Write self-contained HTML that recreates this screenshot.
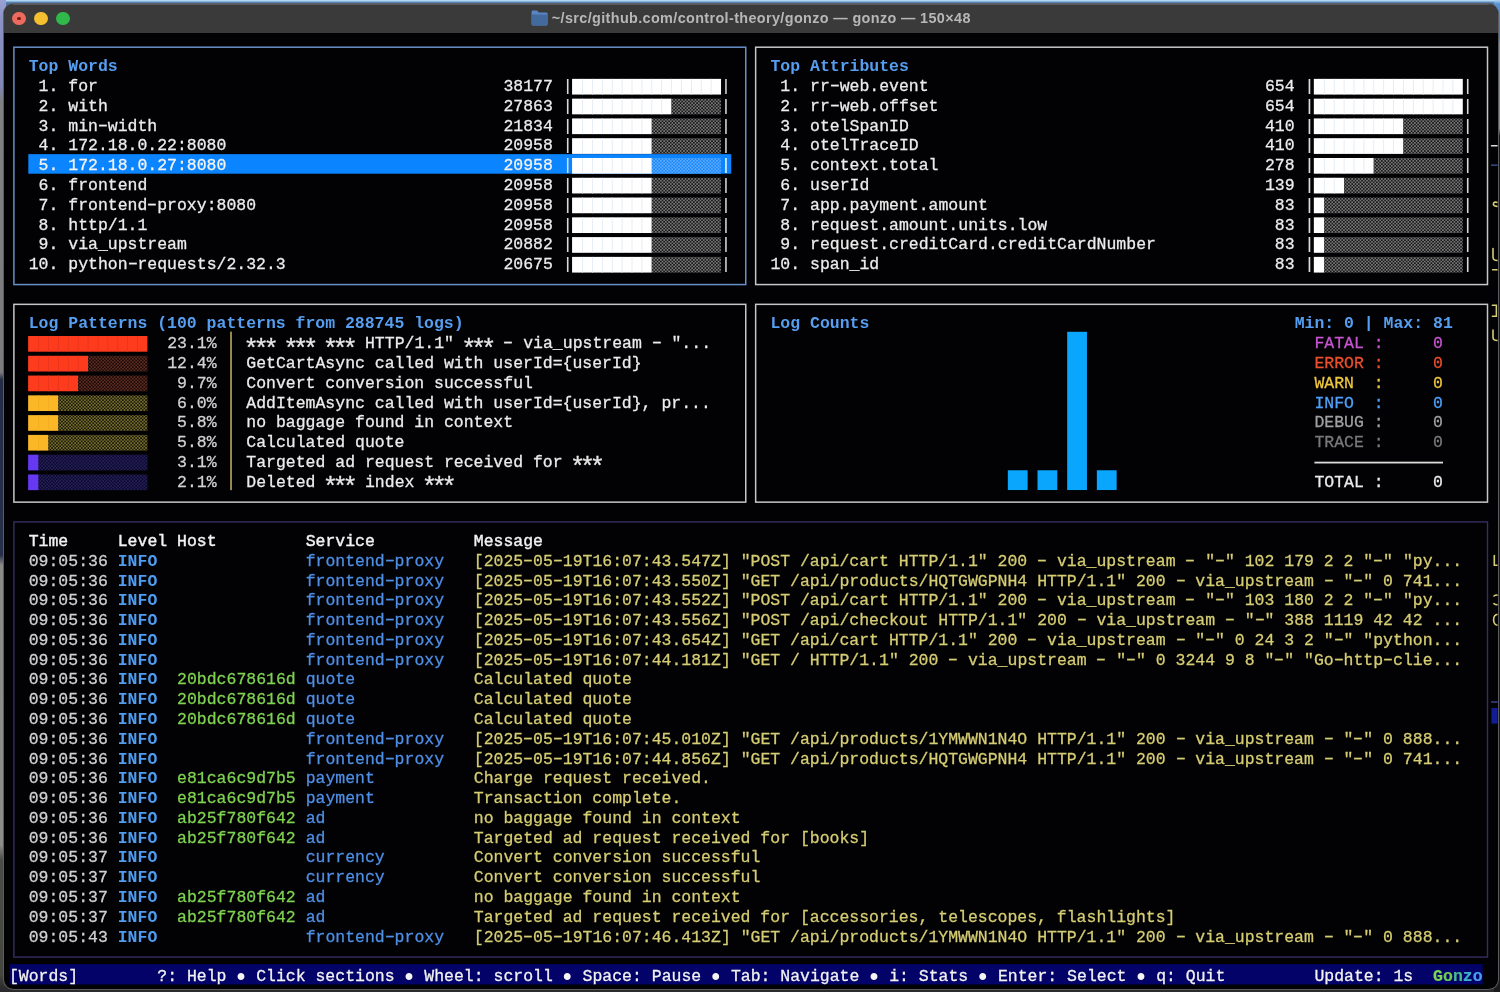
<!DOCTYPE html>
<html lang="en"><head><meta charset="utf-8"><title>gonzo</title>
<style>
html,body{margin:0;padding:0}
body{width:1500px;height:992px;overflow:hidden;background:#2b2b2d;position:relative;font-family:"Liberation Mono","DejaVu Sans Mono",monospace}
#deskT{position:absolute;left:0;top:0;width:1500px;height:6px;background:linear-gradient(#b2d7f3 0,#b2d7f3 1.1px,#5f8bbf 1.9px,#4b7099 4px)}
#deskL{position:absolute;left:0;top:0;width:6px;height:992px;background:linear-gradient(#9aa2d4 0,#8a92c6 20px,#8088b8 85px,#808084 100px,#7c7c7e 372px,#232d45 380px,#26304a 555px,#8a8a86 565px,#8c8c88 845px,#4a4c48 860px,#44463f 975px,#2b2b2d 988px)}
#deskR{position:absolute;left:1494px;top:0;width:6px;height:992px;background:linear-gradient(#b2d7f3 0,#5a8fd0 4px,#4a7ab8 36px,#8c8e92 44px,#909090 128px,#1a1a1c 136px,#1a1a1c 100%)}
#win{position:absolute;left:3.5px;top:4px;width:1494px;height:985px;background:#020204;border-radius:10px 10px 9.5px 9.5px;overflow:hidden;box-shadow:0 0 0 1px #5b5c60}
#tb{position:absolute;left:0;top:0;width:100%;height:29.2px;background:#3a3a3b;will-change:transform}
#tb:before{content:"";position:absolute;left:0;top:0;width:100%;height:1.4px;background:#5c5c5e}
.tl{position:absolute;display:block;top:7.7px;width:13.6px;height:13.6px;border-radius:50%}
#ttl{position:absolute;left:547.8px;top:6.0px;letter-spacing:0.37px;font:bold 14.4px "Liberation Sans",sans-serif;color:#b7b7b8;white-space:pre}
#term{position:absolute;left:0;top:0;width:1500px;height:992px;will-change:transform}
#gfx{position:absolute;left:0;top:0}
.t{position:absolute;white-space:pre;-webkit-text-stroke:0.28px currentColor;font-size:16.48px;line-height:19.78px;height:19.78px;color:#e4e4e4}
.as{position:absolute;white-space:pre;font-size:25.5px;letter-spacing:-5.412px;line-height:19.78px;height:19.78px;color:#e6e6e6;-webkit-text-stroke:0.3px currentColor}
.t b{display:inline-block;font-weight:inherit;transform:translateY(-1.3px) scaleX(1.65)}
.bl{position:absolute;white-space:pre;font-size:25px;line-height:19.78px;height:19.78px;color:#f4f4f4}
.bx{fill:none;stroke-width:1.5}
.bb{stroke:#6890c8}
.bg{stroke:#c6c6c6}
.bp{stroke:#342f62;stroke-width:1.4}
.hd{color:#569ef0;font-weight:bold;-webkit-text-stroke:0}
.w{color:#ececec}
.ws{color:#f4f4f4}
.w2{color:#d2d2d2}
.hh{color:#f2f2f2;-webkit-text-stroke:0.42px currentColor}
.pp{color:#dcdcdc;-webkit-text-stroke:0.15px currentColor}
.pps{color:#f4f8ff;-webkit-text-stroke:0.15px currentColor}
.sel{fill:#0a84ff}
.fw{fill:#fff}
.sw{fill:#e4ebf3}
.sh{fill:url(#pg)}
.shs{fill:url(#ps)}
.fr{fill:#ff3b1e}.mr{fill:#e8351b}
.fy{fill:#fbb726}.my{fill:#f0ae22}
.fp{fill:#6538f2}.mp{fill:#5c33e0}
.sr{fill:url(#pr)}
.sy{fill:url(#py)}
.sp{fill:url(#pp)}
.vsep{fill:#b9a95c}
.hl{fill:#dcdcdc}
.ch{fill:#0aa6fd}
.fa{color:#c955d2}.er{color:#ec4f2d}.wa{color:#edc640}.in{color:#4fa2fb}.de{color:#a0a0a0}.tr{color:#7a7a7a}
.tm{color:#d0d0d0}
.lv{color:#4f9df0;font-weight:bold;-webkit-text-stroke:0}
.ho{color:#7fd351}
.sv{color:#4f8fe6}
.ms{color:#d6cd73}
.sb{fill:#020268}
.st{color:#f2f2f2}
.gz{font-weight:bold;-webkit-text-stroke:0.2px currentColor}
</style></head>
<body>
<div id="deskT"></div><div id="deskL"></div><div id="deskR"></div>
<div id="win">
<div id="tb">
<i class="tl" style="left:8.3px;background:#ec6a5e"></i><i class="tl" style="left:13.3px;top:12.7px;width:3.6px;height:3.6px;background:#7d1a12"></i>
<i class="tl" style="left:30.3px;background:#f5bf2f"></i>
<i class="tl" style="left:52.1px;background:#30b94a"></i>
<svg style="position:absolute;left:526.6px;top:5.8px" width="17.2" height="16" viewBox="0 0 18 16" preserveAspectRatio="none"><path d="M0.6 2 Q0.6 0.6 2 0.6 H6.4 L8.2 2.4 H16 Q17.4 2.4 17.4 3.8 V14 Q17.4 15.4 16 15.4 H2 Q0.6 15.4 0.6 14 Z" fill="#5886c2"/><path d="M0.6 4.6 H17.4 V14 Q17.4 15.4 16 15.4 H2 Q0.6 15.4 0.6 14 Z" fill="#426a9d"/></svg>
<span id="ttl">~/src/github.com/control-theory/gonzo — gonzo — 150×48</span>
</div>
</div>
<div id="term">
<svg id="gfx" width="1500" height="992" viewBox="0 0 1500 992"><defs><clipPath id="ce"><rect x="1488" y="34" width="9.6" height="950"/></clipPath><pattern id="pg" width="3.3" height="3.3" patternUnits="userSpaceOnUse"><rect width="3.3" height="3.3" fill="#787878"/><circle cx="0.825" cy="0.825" r="0.86" fill="#080808"/><circle cx="2.475" cy="2.475" r="0.86" fill="#080808"/></pattern><pattern id="ps" width="3.3" height="3.3" patternUnits="userSpaceOnUse"><rect width="3.3" height="3.3" fill="#5fa9f8"/><circle cx="0.825" cy="0.825" r="0.86" fill="#0a84ff"/><circle cx="2.475" cy="2.475" r="0.86" fill="#0a84ff"/></pattern><pattern id="pr" width="3.3" height="3.3" patternUnits="userSpaceOnUse"><rect width="3.3" height="3.3" fill="#5e2c22"/><circle cx="0.825" cy="0.825" r="0.86" fill="#100403"/><circle cx="2.475" cy="2.475" r="0.86" fill="#100403"/></pattern><pattern id="py" width="3.3" height="3.3" patternUnits="userSpaceOnUse"><rect width="3.3" height="3.3" fill="#756e2e"/><circle cx="0.825" cy="0.825" r="0.86" fill="#0d0b03"/><circle cx="2.475" cy="2.475" r="0.86" fill="#0d0b03"/></pattern><pattern id="pp" width="3.3" height="3.3" patternUnits="userSpaceOnUse"><rect width="3.3" height="3.3" fill="#28214a"/><circle cx="0.825" cy="0.825" r="0.86" fill="#030338"/><circle cx="2.475" cy="2.475" r="0.86" fill="#030338"/></pattern></defs>
<rect class="sel" x="28.33" y="154.13" width="702.89" height="19.58"/>
<rect class="sb" x="9.55" y="964.16" width="1473.11" height="20.28"/>
<rect class="bx bb" x="13.89" y="47.2" width="731.86" height="237.36"/>
<rect class="bx bg" x="755.65" y="47.2" width="731.86" height="237.36"/>
<rect class="bx bg" x="13.89" y="304.34" width="731.86" height="197.8"/>
<rect class="bx bg" x="755.65" y="304.34" width="731.86" height="197.8"/>
<rect class="bx bp" x="13.89" y="521.92" width="1473.61" height="435.16"/>
<rect class="fw" x="572.08" y="78.86" width="148.95" height="15.7"/>
<rect class="sw" x="582.12" y="78.86" width="0.9" height="15.7"/>
<rect class="sw" x="592.01" y="78.86" width="0.9" height="15.7"/>
<rect class="sw" x="601.9" y="78.86" width="0.9" height="15.7"/>
<rect class="sw" x="611.79" y="78.86" width="0.9" height="15.7"/>
<rect class="sw" x="621.68" y="78.86" width="0.9" height="15.7"/>
<rect class="sw" x="631.57" y="78.86" width="0.9" height="15.7"/>
<rect class="sw" x="641.46" y="78.86" width="0.9" height="15.7"/>
<rect class="sw" x="651.35" y="78.86" width="0.9" height="15.7"/>
<rect class="sw" x="661.24" y="78.86" width="0.9" height="15.7"/>
<rect class="sw" x="671.13" y="78.86" width="0.9" height="15.7"/>
<rect class="sw" x="681.02" y="78.86" width="0.9" height="15.7"/>
<rect class="sw" x="690.91" y="78.86" width="0.9" height="15.7"/>
<rect class="sw" x="700.8" y="78.86" width="0.9" height="15.7"/>
<rect class="sw" x="710.69" y="78.86" width="0.9" height="15.7"/>
<rect class="fw" x="572.08" y="98.64" width="99.5" height="15.7"/>
<rect class="sw" x="582.12" y="98.64" width="0.9" height="15.7"/>
<rect class="sw" x="592.01" y="98.64" width="0.9" height="15.7"/>
<rect class="sw" x="601.9" y="98.64" width="0.9" height="15.7"/>
<rect class="sw" x="611.79" y="98.64" width="0.9" height="15.7"/>
<rect class="sw" x="621.68" y="98.64" width="0.9" height="15.7"/>
<rect class="sw" x="631.57" y="98.64" width="0.9" height="15.7"/>
<rect class="sw" x="641.46" y="98.64" width="0.9" height="15.7"/>
<rect class="sw" x="651.35" y="98.64" width="0.9" height="15.7"/>
<rect class="sw" x="661.24" y="98.64" width="0.9" height="15.7"/>
<rect class="sh" x="671.58" y="98.64" width="49.45" height="15.7"/>
<rect class="fw" x="572.08" y="118.42" width="79.72" height="15.7"/>
<rect class="sw" x="582.12" y="118.42" width="0.9" height="15.7"/>
<rect class="sw" x="592.01" y="118.42" width="0.9" height="15.7"/>
<rect class="sw" x="601.9" y="118.42" width="0.9" height="15.7"/>
<rect class="sw" x="611.79" y="118.42" width="0.9" height="15.7"/>
<rect class="sw" x="621.68" y="118.42" width="0.9" height="15.7"/>
<rect class="sw" x="631.57" y="118.42" width="0.9" height="15.7"/>
<rect class="sw" x="641.46" y="118.42" width="0.9" height="15.7"/>
<rect class="sh" x="651.8" y="118.42" width="69.23" height="15.7"/>
<rect class="fw" x="572.08" y="138.2" width="79.72" height="15.7"/>
<rect class="sw" x="582.12" y="138.2" width="0.9" height="15.7"/>
<rect class="sw" x="592.01" y="138.2" width="0.9" height="15.7"/>
<rect class="sw" x="601.9" y="138.2" width="0.9" height="15.7"/>
<rect class="sw" x="611.79" y="138.2" width="0.9" height="15.7"/>
<rect class="sw" x="621.68" y="138.2" width="0.9" height="15.7"/>
<rect class="sw" x="631.57" y="138.2" width="0.9" height="15.7"/>
<rect class="sw" x="641.46" y="138.2" width="0.9" height="15.7"/>
<rect class="sh" x="651.8" y="138.2" width="69.23" height="15.7"/>
<rect class="fw" x="572.08" y="157.98" width="79.72" height="15.7"/>
<rect class="sw" x="582.12" y="157.98" width="0.9" height="15.7"/>
<rect class="sw" x="592.01" y="157.98" width="0.9" height="15.7"/>
<rect class="sw" x="601.9" y="157.98" width="0.9" height="15.7"/>
<rect class="sw" x="611.79" y="157.98" width="0.9" height="15.7"/>
<rect class="sw" x="621.68" y="157.98" width="0.9" height="15.7"/>
<rect class="sw" x="631.57" y="157.98" width="0.9" height="15.7"/>
<rect class="sw" x="641.46" y="157.98" width="0.9" height="15.7"/>
<rect class="shs" x="651.8" y="157.98" width="69.23" height="15.7"/>
<rect class="fw" x="572.08" y="177.76" width="79.72" height="15.7"/>
<rect class="sw" x="582.12" y="177.76" width="0.9" height="15.7"/>
<rect class="sw" x="592.01" y="177.76" width="0.9" height="15.7"/>
<rect class="sw" x="601.9" y="177.76" width="0.9" height="15.7"/>
<rect class="sw" x="611.79" y="177.76" width="0.9" height="15.7"/>
<rect class="sw" x="621.68" y="177.76" width="0.9" height="15.7"/>
<rect class="sw" x="631.57" y="177.76" width="0.9" height="15.7"/>
<rect class="sw" x="641.46" y="177.76" width="0.9" height="15.7"/>
<rect class="sh" x="651.8" y="177.76" width="69.23" height="15.7"/>
<rect class="fw" x="572.08" y="197.54" width="79.72" height="15.7"/>
<rect class="sw" x="582.12" y="197.54" width="0.9" height="15.7"/>
<rect class="sw" x="592.01" y="197.54" width="0.9" height="15.7"/>
<rect class="sw" x="601.9" y="197.54" width="0.9" height="15.7"/>
<rect class="sw" x="611.79" y="197.54" width="0.9" height="15.7"/>
<rect class="sw" x="621.68" y="197.54" width="0.9" height="15.7"/>
<rect class="sw" x="631.57" y="197.54" width="0.9" height="15.7"/>
<rect class="sw" x="641.46" y="197.54" width="0.9" height="15.7"/>
<rect class="sh" x="651.8" y="197.54" width="69.23" height="15.7"/>
<rect class="fw" x="572.08" y="217.32" width="79.72" height="15.7"/>
<rect class="sw" x="582.12" y="217.32" width="0.9" height="15.7"/>
<rect class="sw" x="592.01" y="217.32" width="0.9" height="15.7"/>
<rect class="sw" x="601.9" y="217.32" width="0.9" height="15.7"/>
<rect class="sw" x="611.79" y="217.32" width="0.9" height="15.7"/>
<rect class="sw" x="621.68" y="217.32" width="0.9" height="15.7"/>
<rect class="sw" x="631.57" y="217.32" width="0.9" height="15.7"/>
<rect class="sw" x="641.46" y="217.32" width="0.9" height="15.7"/>
<rect class="sh" x="651.8" y="217.32" width="69.23" height="15.7"/>
<rect class="fw" x="572.08" y="237.1" width="79.72" height="15.7"/>
<rect class="sw" x="582.12" y="237.1" width="0.9" height="15.7"/>
<rect class="sw" x="592.01" y="237.1" width="0.9" height="15.7"/>
<rect class="sw" x="601.9" y="237.1" width="0.9" height="15.7"/>
<rect class="sw" x="611.79" y="237.1" width="0.9" height="15.7"/>
<rect class="sw" x="621.68" y="237.1" width="0.9" height="15.7"/>
<rect class="sw" x="631.57" y="237.1" width="0.9" height="15.7"/>
<rect class="sw" x="641.46" y="237.1" width="0.9" height="15.7"/>
<rect class="sh" x="651.8" y="237.1" width="69.23" height="15.7"/>
<rect class="fw" x="572.08" y="256.88" width="79.72" height="15.7"/>
<rect class="sw" x="582.12" y="256.88" width="0.9" height="15.7"/>
<rect class="sw" x="592.01" y="256.88" width="0.9" height="15.7"/>
<rect class="sw" x="601.9" y="256.88" width="0.9" height="15.7"/>
<rect class="sw" x="611.79" y="256.88" width="0.9" height="15.7"/>
<rect class="sw" x="621.68" y="256.88" width="0.9" height="15.7"/>
<rect class="sw" x="631.57" y="256.88" width="0.9" height="15.7"/>
<rect class="sw" x="641.46" y="256.88" width="0.9" height="15.7"/>
<rect class="sh" x="651.8" y="256.88" width="69.23" height="15.7"/>
<rect class="fw" x="1313.83" y="78.86" width="148.95" height="15.7"/>
<rect class="sw" x="1323.87" y="78.86" width="0.9" height="15.7"/>
<rect class="sw" x="1333.76" y="78.86" width="0.9" height="15.7"/>
<rect class="sw" x="1343.65" y="78.86" width="0.9" height="15.7"/>
<rect class="sw" x="1353.54" y="78.86" width="0.9" height="15.7"/>
<rect class="sw" x="1363.43" y="78.86" width="0.9" height="15.7"/>
<rect class="sw" x="1373.32" y="78.86" width="0.9" height="15.7"/>
<rect class="sw" x="1383.21" y="78.86" width="0.9" height="15.7"/>
<rect class="sw" x="1393.1" y="78.86" width="0.9" height="15.7"/>
<rect class="sw" x="1402.99" y="78.86" width="0.9" height="15.7"/>
<rect class="sw" x="1412.88" y="78.86" width="0.9" height="15.7"/>
<rect class="sw" x="1422.77" y="78.86" width="0.9" height="15.7"/>
<rect class="sw" x="1432.66" y="78.86" width="0.9" height="15.7"/>
<rect class="sw" x="1442.55" y="78.86" width="0.9" height="15.7"/>
<rect class="sw" x="1452.44" y="78.86" width="0.9" height="15.7"/>
<rect class="fw" x="1313.83" y="98.64" width="148.95" height="15.7"/>
<rect class="sw" x="1323.87" y="98.64" width="0.9" height="15.7"/>
<rect class="sw" x="1333.76" y="98.64" width="0.9" height="15.7"/>
<rect class="sw" x="1343.65" y="98.64" width="0.9" height="15.7"/>
<rect class="sw" x="1353.54" y="98.64" width="0.9" height="15.7"/>
<rect class="sw" x="1363.43" y="98.64" width="0.9" height="15.7"/>
<rect class="sw" x="1373.32" y="98.64" width="0.9" height="15.7"/>
<rect class="sw" x="1383.21" y="98.64" width="0.9" height="15.7"/>
<rect class="sw" x="1393.1" y="98.64" width="0.9" height="15.7"/>
<rect class="sw" x="1402.99" y="98.64" width="0.9" height="15.7"/>
<rect class="sw" x="1412.88" y="98.64" width="0.9" height="15.7"/>
<rect class="sw" x="1422.77" y="98.64" width="0.9" height="15.7"/>
<rect class="sw" x="1432.66" y="98.64" width="0.9" height="15.7"/>
<rect class="sw" x="1442.55" y="98.64" width="0.9" height="15.7"/>
<rect class="sw" x="1452.44" y="98.64" width="0.9" height="15.7"/>
<rect class="fw" x="1313.83" y="118.42" width="89.61" height="15.7"/>
<rect class="sw" x="1323.87" y="118.42" width="0.9" height="15.7"/>
<rect class="sw" x="1333.76" y="118.42" width="0.9" height="15.7"/>
<rect class="sw" x="1343.65" y="118.42" width="0.9" height="15.7"/>
<rect class="sw" x="1353.54" y="118.42" width="0.9" height="15.7"/>
<rect class="sw" x="1363.43" y="118.42" width="0.9" height="15.7"/>
<rect class="sw" x="1373.32" y="118.42" width="0.9" height="15.7"/>
<rect class="sw" x="1383.21" y="118.42" width="0.9" height="15.7"/>
<rect class="sw" x="1393.1" y="118.42" width="0.9" height="15.7"/>
<rect class="sh" x="1403.44" y="118.42" width="59.34" height="15.7"/>
<rect class="fw" x="1313.83" y="138.2" width="89.61" height="15.7"/>
<rect class="sw" x="1323.87" y="138.2" width="0.9" height="15.7"/>
<rect class="sw" x="1333.76" y="138.2" width="0.9" height="15.7"/>
<rect class="sw" x="1343.65" y="138.2" width="0.9" height="15.7"/>
<rect class="sw" x="1353.54" y="138.2" width="0.9" height="15.7"/>
<rect class="sw" x="1363.43" y="138.2" width="0.9" height="15.7"/>
<rect class="sw" x="1373.32" y="138.2" width="0.9" height="15.7"/>
<rect class="sw" x="1383.21" y="138.2" width="0.9" height="15.7"/>
<rect class="sw" x="1393.1" y="138.2" width="0.9" height="15.7"/>
<rect class="sh" x="1403.44" y="138.2" width="59.34" height="15.7"/>
<rect class="fw" x="1313.83" y="157.98" width="59.94" height="15.7"/>
<rect class="sw" x="1323.87" y="157.98" width="0.9" height="15.7"/>
<rect class="sw" x="1333.76" y="157.98" width="0.9" height="15.7"/>
<rect class="sw" x="1343.65" y="157.98" width="0.9" height="15.7"/>
<rect class="sw" x="1353.54" y="157.98" width="0.9" height="15.7"/>
<rect class="sw" x="1363.43" y="157.98" width="0.9" height="15.7"/>
<rect class="sh" x="1373.77" y="157.98" width="89.01" height="15.7"/>
<rect class="fw" x="1313.83" y="177.76" width="30.27" height="15.7"/>
<rect class="sw" x="1323.87" y="177.76" width="0.9" height="15.7"/>
<rect class="sw" x="1333.76" y="177.76" width="0.9" height="15.7"/>
<rect class="sh" x="1344.1" y="177.76" width="118.68" height="15.7"/>
<rect class="fw" x="1313.83" y="197.54" width="10.49" height="15.7"/>
<rect class="sh" x="1324.32" y="197.54" width="138.46" height="15.7"/>
<rect class="fw" x="1313.83" y="217.32" width="10.49" height="15.7"/>
<rect class="sh" x="1324.32" y="217.32" width="138.46" height="15.7"/>
<rect class="fw" x="1313.83" y="237.1" width="10.49" height="15.7"/>
<rect class="sh" x="1324.32" y="237.1" width="138.46" height="15.7"/>
<rect class="fw" x="1313.83" y="256.88" width="10.49" height="15.7"/>
<rect class="sh" x="1324.32" y="256.88" width="138.46" height="15.7"/>
<rect class="fr" x="28.13" y="336" width="119.28" height="15.7"/>
<rect class="mr" x="38.17" y="336" width="0.9" height="15.7"/>
<rect class="mr" x="48.06" y="336" width="0.9" height="15.7"/>
<rect class="mr" x="57.95" y="336" width="0.9" height="15.7"/>
<rect class="mr" x="67.84" y="336" width="0.9" height="15.7"/>
<rect class="mr" x="77.73" y="336" width="0.9" height="15.7"/>
<rect class="mr" x="87.62" y="336" width="0.9" height="15.7"/>
<rect class="mr" x="97.51" y="336" width="0.9" height="15.7"/>
<rect class="mr" x="107.4" y="336" width="0.9" height="15.7"/>
<rect class="mr" x="117.29" y="336" width="0.9" height="15.7"/>
<rect class="mr" x="127.18" y="336" width="0.9" height="15.7"/>
<rect class="mr" x="137.07" y="336" width="0.9" height="15.7"/>
<rect class="fr" x="28.13" y="355.78" width="59.94" height="15.7"/>
<rect class="mr" x="38.17" y="355.78" width="0.9" height="15.7"/>
<rect class="mr" x="48.06" y="355.78" width="0.9" height="15.7"/>
<rect class="mr" x="57.95" y="355.78" width="0.9" height="15.7"/>
<rect class="mr" x="67.84" y="355.78" width="0.9" height="15.7"/>
<rect class="mr" x="77.73" y="355.78" width="0.9" height="15.7"/>
<rect class="sr" x="88.07" y="355.78" width="59.34" height="15.7"/>
<rect class="fr" x="28.13" y="375.56" width="50.05" height="15.7"/>
<rect class="mr" x="38.17" y="375.56" width="0.9" height="15.7"/>
<rect class="mr" x="48.06" y="375.56" width="0.9" height="15.7"/>
<rect class="mr" x="57.95" y="375.56" width="0.9" height="15.7"/>
<rect class="mr" x="67.84" y="375.56" width="0.9" height="15.7"/>
<rect class="sr" x="78.18" y="375.56" width="69.23" height="15.7"/>
<rect class="fy" x="28.13" y="395.34" width="30.27" height="15.7"/>
<rect class="my" x="38.17" y="395.34" width="0.9" height="15.7"/>
<rect class="my" x="48.06" y="395.34" width="0.9" height="15.7"/>
<rect class="sy" x="58.4" y="395.34" width="89.01" height="15.7"/>
<rect class="fy" x="28.13" y="415.12" width="30.27" height="15.7"/>
<rect class="my" x="38.17" y="415.12" width="0.9" height="15.7"/>
<rect class="my" x="48.06" y="415.12" width="0.9" height="15.7"/>
<rect class="sy" x="58.4" y="415.12" width="89.01" height="15.7"/>
<rect class="fy" x="28.13" y="434.9" width="20.38" height="15.7"/>
<rect class="my" x="38.17" y="434.9" width="0.9" height="15.7"/>
<rect class="sy" x="48.51" y="434.9" width="98.9" height="15.7"/>
<rect class="fp" x="28.13" y="454.68" width="10.49" height="15.7"/>
<rect class="sp" x="38.62" y="454.68" width="108.79" height="15.7"/>
<rect class="fp" x="28.13" y="474.46" width="10.49" height="15.7"/>
<rect class="sp" x="38.62" y="474.46" width="108.79" height="15.7"/>
<rect class="vsep" x="230.22" y="331.6" width="1.6" height="158.54"/>
<rect class="hl" x="1314.43" y="461.68" width="128.57" height="1.8"/>
<rect class="ch" x="1007.84" y="470.26" width="19.78" height="19.78"/>
<rect class="ch" x="1037.51" y="470.26" width="19.78" height="19.78"/>
<rect class="ch" x="1067.18" y="331.8" width="19.78" height="158.24"/>
<rect class="ch" x="1096.85" y="470.26" width="19.78" height="19.78"/>
<g clip-path="url(#ce)" fill="none" stroke-linecap="round"><path d="M1491.5 145.7H1498" stroke="#dcdcdc" stroke-width="1.5"/><path d="M1491.5 165.2H1498" stroke="#3d5da0" stroke-width="1.3"/><g stroke="#d6cd73" stroke-width="1.6"><path d="M1498 202.6Q1493.2 201 1493.4 204.6Q1494 206.6 1498 206.4"/><path d="M1493 248.5V257.5Q1493.2 260.8 1498 260.4"/><path d="M1492.6 269.7H1498"/><path d="M1492.4 305.2H1496.4V316.2H1492.4"/><path d="M1493 330V337.6Q1493.2 340.8 1498 340.4"/><path d="M1494.3 555.5V565.3H1498"/><path d="M1494 596Q1496 594.4 1498 595.2M1494 603.6Q1496 605.2 1498 604.6"/><path d="M1498 614.2Q1493.6 614.6 1493.6 619.7Q1493.6 625 1498 625.3"/></g><path d="M1491.5 702H1498" stroke="#39458f" stroke-width="1.3"/><rect x="1491.4" y="708" width="7" height="15.6" fill="#111d90" stroke="none"/></g>
</svg>
<span class="t hd" style="left:28.73px;top:57.28px">Top Words</span>
<span class="t w" style="left:28.73px;top:77.06px"> 1. for</span>
<span class="t w" style="left:503.45px;top:77.06px">38177</span>
<span class="t pp" style="left:562.79px;top:77.06px">|</span>
<span class="t pp" style="left:721.03px;top:77.06px">|</span>
<span class="t w" style="left:28.73px;top:96.84px"> 2. with</span>
<span class="t w" style="left:503.45px;top:96.84px">27863</span>
<span class="t pp" style="left:562.79px;top:96.84px">|</span>
<span class="t pp" style="left:721.03px;top:96.84px">|</span>
<span class="t w" style="left:28.73px;top:116.62px"> 3. min<b>-</b>width</span>
<span class="t w" style="left:503.45px;top:116.62px">21834</span>
<span class="t pp" style="left:562.79px;top:116.62px">|</span>
<span class="t pp" style="left:721.03px;top:116.62px">|</span>
<span class="t w" style="left:28.73px;top:136.4px"> 4. 172.18.0.22:8080</span>
<span class="t w" style="left:503.45px;top:136.4px">20958</span>
<span class="t pp" style="left:562.79px;top:136.4px">|</span>
<span class="t pp" style="left:721.03px;top:136.4px">|</span>
<span class="t ws" style="left:28.73px;top:156.18px"> 5. 172.18.0.27:8080</span>
<span class="t ws" style="left:503.45px;top:156.18px">20958</span>
<span class="t pp" style="left:562.79px;top:156.18px">|</span>
<span class="t pps" style="left:721.03px;top:156.18px">|</span>
<span class="t w" style="left:28.73px;top:175.96px"> 6. frontend</span>
<span class="t w" style="left:503.45px;top:175.96px">20958</span>
<span class="t pp" style="left:562.79px;top:175.96px">|</span>
<span class="t pp" style="left:721.03px;top:175.96px">|</span>
<span class="t w" style="left:28.73px;top:195.74px"> 7. frontend<b>-</b>proxy:8080</span>
<span class="t w" style="left:503.45px;top:195.74px">20958</span>
<span class="t pp" style="left:562.79px;top:195.74px">|</span>
<span class="t pp" style="left:721.03px;top:195.74px">|</span>
<span class="t w" style="left:28.73px;top:215.52px"> 8. http/1.1</span>
<span class="t w" style="left:503.45px;top:215.52px">20958</span>
<span class="t pp" style="left:562.79px;top:215.52px">|</span>
<span class="t pp" style="left:721.03px;top:215.52px">|</span>
<span class="t w" style="left:28.73px;top:235.3px"> 9. via_upstream</span>
<span class="t w" style="left:503.45px;top:235.3px">20882</span>
<span class="t pp" style="left:562.79px;top:235.3px">|</span>
<span class="t pp" style="left:721.03px;top:235.3px">|</span>
<span class="t w" style="left:28.73px;top:255.08px">10. python<b>-</b>requests/2.32.3</span>
<span class="t w" style="left:503.45px;top:255.08px">20675</span>
<span class="t pp" style="left:562.79px;top:255.08px">|</span>
<span class="t pp" style="left:721.03px;top:255.08px">|</span>
<span class="t hd" style="left:770.48px;top:57.28px">Top Attributes</span>
<span class="t w" style="left:770.48px;top:77.06px"> 1. rr<b>-</b>web.event</span>
<span class="t w" style="left:1245.2px;top:77.06px">  654</span>
<span class="t pp" style="left:1304.54px;top:77.06px">|</span>
<span class="t pp" style="left:1462.78px;top:77.06px">|</span>
<span class="t w" style="left:770.48px;top:96.84px"> 2. rr<b>-</b>web.offset</span>
<span class="t w" style="left:1245.2px;top:96.84px">  654</span>
<span class="t pp" style="left:1304.54px;top:96.84px">|</span>
<span class="t pp" style="left:1462.78px;top:96.84px">|</span>
<span class="t w" style="left:770.48px;top:116.62px"> 3. otelSpanID</span>
<span class="t w" style="left:1245.2px;top:116.62px">  410</span>
<span class="t pp" style="left:1304.54px;top:116.62px">|</span>
<span class="t pp" style="left:1462.78px;top:116.62px">|</span>
<span class="t w" style="left:770.48px;top:136.4px"> 4. otelTraceID</span>
<span class="t w" style="left:1245.2px;top:136.4px">  410</span>
<span class="t pp" style="left:1304.54px;top:136.4px">|</span>
<span class="t pp" style="left:1462.78px;top:136.4px">|</span>
<span class="t w" style="left:770.48px;top:156.18px"> 5. context.total</span>
<span class="t w" style="left:1245.2px;top:156.18px">  278</span>
<span class="t pp" style="left:1304.54px;top:156.18px">|</span>
<span class="t pp" style="left:1462.78px;top:156.18px">|</span>
<span class="t w" style="left:770.48px;top:175.96px"> 6. userId</span>
<span class="t w" style="left:1245.2px;top:175.96px">  139</span>
<span class="t pp" style="left:1304.54px;top:175.96px">|</span>
<span class="t pp" style="left:1462.78px;top:175.96px">|</span>
<span class="t w" style="left:770.48px;top:195.74px"> 7. app.payment.amount</span>
<span class="t w" style="left:1245.2px;top:195.74px">   83</span>
<span class="t pp" style="left:1304.54px;top:195.74px">|</span>
<span class="t pp" style="left:1462.78px;top:195.74px">|</span>
<span class="t w" style="left:770.48px;top:215.52px"> 8. request.amount.units.low</span>
<span class="t w" style="left:1245.2px;top:215.52px">   83</span>
<span class="t pp" style="left:1304.54px;top:215.52px">|</span>
<span class="t pp" style="left:1462.78px;top:215.52px">|</span>
<span class="t w" style="left:770.48px;top:235.3px"> 9. request.creditCard.creditCardNumber</span>
<span class="t w" style="left:1245.2px;top:235.3px">   83</span>
<span class="t pp" style="left:1304.54px;top:235.3px">|</span>
<span class="t pp" style="left:1462.78px;top:235.3px">|</span>
<span class="t w" style="left:770.48px;top:255.08px">10. span_id</span>
<span class="t w" style="left:1245.2px;top:255.08px">   83</span>
<span class="t pp" style="left:1304.54px;top:255.08px">|</span>
<span class="t pp" style="left:1462.78px;top:255.08px">|</span>
<span class="t hd" style="left:28.73px;top:314.42px">Log Patterns (100 patterns from 288745 logs)</span>
<span class="t w2" style="left:157.3px;top:334.2px"> 23.1%</span>
<span class="as" style="left:243.61px;top:340.8px">***</span>
<span class="as" style="left:283.17px;top:340.8px">***</span>
<span class="as" style="left:322.73px;top:340.8px">***</span>
<span class="t w" style="left:364.99px;top:334.2px">HTTP/1.1"</span>
<span class="as" style="left:461.19px;top:340.8px">***</span>
<span class="t w" style="left:503.45px;top:334.2px"><b>-</b> via_upstream <b>-</b> "...</span>
<span class="t w2" style="left:157.3px;top:353.98px"> 12.4%</span>
<span class="t w" style="left:246.31px;top:353.98px">GetCartAsync called with userId={userId}</span>
<span class="t w2" style="left:157.3px;top:373.76px">  9.7%</span>
<span class="t w" style="left:246.31px;top:373.76px">Convert conversion successful</span>
<span class="t w2" style="left:157.3px;top:393.54px">  6.0%</span>
<span class="t w" style="left:246.31px;top:393.54px">AddItemAsync called with userId={userId}, pr...</span>
<span class="t w2" style="left:157.3px;top:413.32px">  5.8%</span>
<span class="t w" style="left:246.31px;top:413.32px">no baggage found in context</span>
<span class="t w2" style="left:157.3px;top:433.1px">  5.8%</span>
<span class="t w" style="left:246.31px;top:433.1px">Calculated quote</span>
<span class="t w2" style="left:157.3px;top:452.88px">  3.1%</span>
<span class="t w" style="left:246.31px;top:452.88px">Targeted ad request received for</span>
<span class="as" style="left:569.98px;top:459.48px">***</span>
<span class="t w2" style="left:157.3px;top:472.66px">  2.1%</span>
<span class="t w" style="left:246.31px;top:472.66px">Deleted</span>
<span class="as" style="left:322.73px;top:479.26px">***</span>
<span class="t w" style="left:364.99px;top:472.66px">index</span>
<span class="as" style="left:421.63px;top:479.26px">***</span>
<span class="t hd" style="left:770.48px;top:314.42px">Log Counts</span>
<span class="t hd" style="left:1294.65px;top:314.42px">Min: 0 | Max: 81</span>
<span class="t fa" style="left:1314.43px;top:334.2px">FATAL :     0</span>
<span class="t er" style="left:1314.43px;top:353.98px">ERROR :     0</span>
<span class="t wa" style="left:1314.43px;top:373.76px">WARN  :     0</span>
<span class="t in" style="left:1314.43px;top:393.54px">INFO  :     0</span>
<span class="t de" style="left:1314.43px;top:413.32px">DEBUG :     0</span>
<span class="t tr" style="left:1314.43px;top:433.1px">TRACE :     0</span>
<span class="t w" style="left:1314.43px;top:472.66px">TOTAL :     0</span>
<span class="t hh" style="left:28.73px;top:532px">Time</span>
<span class="t hh" style="left:117.74px;top:532px">Level</span>
<span class="t hh" style="left:177.08px;top:532px">Host</span>
<span class="t hh" style="left:305.65px;top:532px">Service</span>
<span class="t hh" style="left:473.78px;top:532px">Message</span>
<span class="t tm" style="left:28.73px;top:551.78px">09:05:36</span>
<span class="t lv" style="left:117.74px;top:551.78px">INFO</span>
<span class="t sv" style="left:305.65px;top:551.78px">frontend<b>-</b>proxy</span>
<span class="t ms" style="left:473.78px;top:551.78px">[2025<b>-</b>05<b>-</b>19T16:07:43.547Z] "POST /api/cart HTTP/1.1" 200 <b>-</b> via_upstream <b>-</b> "<b>-</b>" 102 179 2 2 "<b>-</b>" "py...</span>
<span class="t tm" style="left:28.73px;top:571.56px">09:05:36</span>
<span class="t lv" style="left:117.74px;top:571.56px">INFO</span>
<span class="t sv" style="left:305.65px;top:571.56px">frontend<b>-</b>proxy</span>
<span class="t ms" style="left:473.78px;top:571.56px">[2025<b>-</b>05<b>-</b>19T16:07:43.550Z] "GET /api/products/HQTGWGPNH4 HTTP/1.1" 200 <b>-</b> via_upstream <b>-</b> "<b>-</b>" 0 741...</span>
<span class="t tm" style="left:28.73px;top:591.34px">09:05:36</span>
<span class="t lv" style="left:117.74px;top:591.34px">INFO</span>
<span class="t sv" style="left:305.65px;top:591.34px">frontend<b>-</b>proxy</span>
<span class="t ms" style="left:473.78px;top:591.34px">[2025<b>-</b>05<b>-</b>19T16:07:43.552Z] "POST /api/cart HTTP/1.1" 200 <b>-</b> via_upstream <b>-</b> "<b>-</b>" 103 180 2 2 "<b>-</b>" "py...</span>
<span class="t tm" style="left:28.73px;top:611.12px">09:05:36</span>
<span class="t lv" style="left:117.74px;top:611.12px">INFO</span>
<span class="t sv" style="left:305.65px;top:611.12px">frontend<b>-</b>proxy</span>
<span class="t ms" style="left:473.78px;top:611.12px">[2025<b>-</b>05<b>-</b>19T16:07:43.556Z] "POST /api/checkout HTTP/1.1" 200 <b>-</b> via_upstream <b>-</b> "<b>-</b>" 388 1119 42 42 ...</span>
<span class="t tm" style="left:28.73px;top:630.9px">09:05:36</span>
<span class="t lv" style="left:117.74px;top:630.9px">INFO</span>
<span class="t sv" style="left:305.65px;top:630.9px">frontend<b>-</b>proxy</span>
<span class="t ms" style="left:473.78px;top:630.9px">[2025<b>-</b>05<b>-</b>19T16:07:43.654Z] "GET /api/cart HTTP/1.1" 200 <b>-</b> via_upstream <b>-</b> "<b>-</b>" 0 24 3 2 "<b>-</b>" "python...</span>
<span class="t tm" style="left:28.73px;top:650.68px">09:05:36</span>
<span class="t lv" style="left:117.74px;top:650.68px">INFO</span>
<span class="t sv" style="left:305.65px;top:650.68px">frontend<b>-</b>proxy</span>
<span class="t ms" style="left:473.78px;top:650.68px">[2025<b>-</b>05<b>-</b>19T16:07:44.181Z] "GET / HTTP/1.1" 200 <b>-</b> via_upstream <b>-</b> "<b>-</b>" 0 3244 9 8 "<b>-</b>" "Go<b>-</b>http<b>-</b>clie...</span>
<span class="t tm" style="left:28.73px;top:670.46px">09:05:36</span>
<span class="t lv" style="left:117.74px;top:670.46px">INFO</span>
<span class="t ho" style="left:177.08px;top:670.46px">20bdc678616d</span>
<span class="t sv" style="left:305.65px;top:670.46px">quote</span>
<span class="t ms" style="left:473.78px;top:670.46px">Calculated quote</span>
<span class="t tm" style="left:28.73px;top:690.24px">09:05:36</span>
<span class="t lv" style="left:117.74px;top:690.24px">INFO</span>
<span class="t ho" style="left:177.08px;top:690.24px">20bdc678616d</span>
<span class="t sv" style="left:305.65px;top:690.24px">quote</span>
<span class="t ms" style="left:473.78px;top:690.24px">Calculated quote</span>
<span class="t tm" style="left:28.73px;top:710.02px">09:05:36</span>
<span class="t lv" style="left:117.74px;top:710.02px">INFO</span>
<span class="t ho" style="left:177.08px;top:710.02px">20bdc678616d</span>
<span class="t sv" style="left:305.65px;top:710.02px">quote</span>
<span class="t ms" style="left:473.78px;top:710.02px">Calculated quote</span>
<span class="t tm" style="left:28.73px;top:729.8px">09:05:36</span>
<span class="t lv" style="left:117.74px;top:729.8px">INFO</span>
<span class="t sv" style="left:305.65px;top:729.8px">frontend<b>-</b>proxy</span>
<span class="t ms" style="left:473.78px;top:729.8px">[2025<b>-</b>05<b>-</b>19T16:07:45.010Z] "GET /api/products/1YMWWN1N4O HTTP/1.1" 200 <b>-</b> via_upstream <b>-</b> "<b>-</b>" 0 888...</span>
<span class="t tm" style="left:28.73px;top:749.58px">09:05:36</span>
<span class="t lv" style="left:117.74px;top:749.58px">INFO</span>
<span class="t sv" style="left:305.65px;top:749.58px">frontend<b>-</b>proxy</span>
<span class="t ms" style="left:473.78px;top:749.58px">[2025<b>-</b>05<b>-</b>19T16:07:44.856Z] "GET /api/products/HQTGWGPNH4 HTTP/1.1" 200 <b>-</b> via_upstream <b>-</b> "<b>-</b>" 0 741...</span>
<span class="t tm" style="left:28.73px;top:769.36px">09:05:36</span>
<span class="t lv" style="left:117.74px;top:769.36px">INFO</span>
<span class="t ho" style="left:177.08px;top:769.36px">e81ca6c9d7b5</span>
<span class="t sv" style="left:305.65px;top:769.36px">payment</span>
<span class="t ms" style="left:473.78px;top:769.36px">Charge request received.</span>
<span class="t tm" style="left:28.73px;top:789.14px">09:05:36</span>
<span class="t lv" style="left:117.74px;top:789.14px">INFO</span>
<span class="t ho" style="left:177.08px;top:789.14px">e81ca6c9d7b5</span>
<span class="t sv" style="left:305.65px;top:789.14px">payment</span>
<span class="t ms" style="left:473.78px;top:789.14px">Transaction complete.</span>
<span class="t tm" style="left:28.73px;top:808.92px">09:05:36</span>
<span class="t lv" style="left:117.74px;top:808.92px">INFO</span>
<span class="t ho" style="left:177.08px;top:808.92px">ab25f780f642</span>
<span class="t sv" style="left:305.65px;top:808.92px">ad</span>
<span class="t ms" style="left:473.78px;top:808.92px">no baggage found in context</span>
<span class="t tm" style="left:28.73px;top:828.7px">09:05:36</span>
<span class="t lv" style="left:117.74px;top:828.7px">INFO</span>
<span class="t ho" style="left:177.08px;top:828.7px">ab25f780f642</span>
<span class="t sv" style="left:305.65px;top:828.7px">ad</span>
<span class="t ms" style="left:473.78px;top:828.7px">Targeted ad request received for [books]</span>
<span class="t tm" style="left:28.73px;top:848.48px">09:05:37</span>
<span class="t lv" style="left:117.74px;top:848.48px">INFO</span>
<span class="t sv" style="left:305.65px;top:848.48px">currency</span>
<span class="t ms" style="left:473.78px;top:848.48px">Convert conversion successful</span>
<span class="t tm" style="left:28.73px;top:868.26px">09:05:37</span>
<span class="t lv" style="left:117.74px;top:868.26px">INFO</span>
<span class="t sv" style="left:305.65px;top:868.26px">currency</span>
<span class="t ms" style="left:473.78px;top:868.26px">Convert conversion successful</span>
<span class="t tm" style="left:28.73px;top:888.04px">09:05:37</span>
<span class="t lv" style="left:117.74px;top:888.04px">INFO</span>
<span class="t ho" style="left:177.08px;top:888.04px">ab25f780f642</span>
<span class="t sv" style="left:305.65px;top:888.04px">ad</span>
<span class="t ms" style="left:473.78px;top:888.04px">no baggage found in context</span>
<span class="t tm" style="left:28.73px;top:907.82px">09:05:37</span>
<span class="t lv" style="left:117.74px;top:907.82px">INFO</span>
<span class="t ho" style="left:177.08px;top:907.82px">ab25f780f642</span>
<span class="t sv" style="left:305.65px;top:907.82px">ad</span>
<span class="t ms" style="left:473.78px;top:907.82px">Targeted ad request received for [accessories, telescopes, flashlights]</span>
<span class="t tm" style="left:28.73px;top:927.6px">09:05:43</span>
<span class="t lv" style="left:117.74px;top:927.6px">INFO</span>
<span class="t sv" style="left:305.65px;top:927.6px">frontend<b>-</b>proxy</span>
<span class="t ms" style="left:473.78px;top:927.6px">[2025<b>-</b>05<b>-</b>19T16:07:46.413Z] "GET /api/products/1YMWWN1N4O HTTP/1.1" 200 <b>-</b> via_upstream <b>-</b> "<b>-</b>" 0 888...</span>
<span class="t st" style="left:8.95px;top:967.16px">[Words]</span>
<span class="t st" style="left:157.3px;top:967.16px">?: Help</span>
<span class="bl" style="left:233.47px;top:968.86px">•</span>
<span class="t st" style="left:256.2px;top:967.16px">Click sections</span>
<span class="bl" style="left:401.6px;top:968.86px">•</span>
<span class="t st" style="left:424.33px;top:967.16px">Wheel: scroll</span>
<span class="bl" style="left:559.84px;top:968.86px">•</span>
<span class="t st" style="left:582.57px;top:967.16px">Space: Pause</span>
<span class="bl" style="left:708.19px;top:968.86px">•</span>
<span class="t st" style="left:730.92px;top:967.16px">Tab: Navigate</span>
<span class="bl" style="left:866.43px;top:968.86px">•</span>
<span class="t st" style="left:889.16px;top:967.16px">i: Stats</span>
<span class="bl" style="left:975.22px;top:968.86px">•</span>
<span class="t st" style="left:997.95px;top:967.16px">Enter: Select</span>
<span class="bl" style="left:1133.46px;top:968.86px">•</span>
<span class="t st" style="left:1156.19px;top:967.16px">q: Quit</span>
<span class="t st" style="left:1314.43px;top:967.16px">Update: 1s</span>
<span class="t gz" style="left:1433.11px;top:967.16px"><span style="color:#7ad856">G</span><span style="color:#6dcd50">o</span><span style="color:#45bd8c">n</span><span style="color:#3cb0cc">z</span><span style="color:#4b9fee">o</span></span>
</div>
</body></html>
